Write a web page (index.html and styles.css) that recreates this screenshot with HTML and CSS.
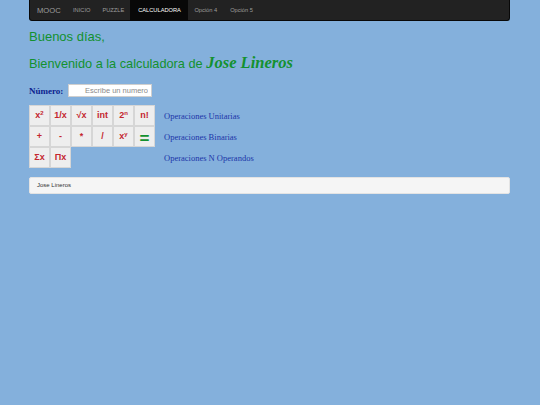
FILE: index.html
```html
<!DOCTYPE html>
<html lang="es">
<head>
<meta charset="utf-8">
<title>Calculadora</title>
<link rel="stylesheet" href="styles.css">
</head>
<body>
<div class="container">
  <nav class="navbar">
    <span class="brand">MOOC</span>
    <a class="nav-item">INICIO</a>
    <a class="nav-item">PUZZLE</a>
    <a class="nav-item active">CALCULADORA</a>
    <a class="nav-item small">Opción 4</a>
    <a class="nav-item small">Opción 5</a>
  </nav>
  <h1 class="greet">Buenos días,</h1>
  <h2 class="welcome">Bienvenido a la calculadora de <em class="name">Jose Lineros</em></h2>
  <div class="num-row">
    <label class="num-label">Número:</label>
    <input class="num-input" type="text" placeholder="Escribe un numero">
  </div>
  <div class="ops">
    <div class="op-row">
      <div class="btns">
        <button class="btn">x<sup>2</sup></button>
        <button class="btn">1/x</button>
        <button class="btn">√x</button>
        <button class="btn">int</button>
        <button class="btn">2<sup>n</sup></button>
        <button class="btn">n!</button>
      </div>
      <span class="op-label">Operaciones Unitarias</span>
    </div>
    <div class="op-row">
      <div class="btns">
        <button class="btn">+</button>
        <button class="btn">-</button>
        <button class="btn">*</button>
        <button class="btn">/</button>
        <button class="btn">x<sup>y</sup></button>
        <button class="btn eq">=</button>
      </div>
      <span class="op-label">Operaciones Binarias</span>
    </div>
    <div class="op-row">
      <div class="btns">
        <button class="btn">Σx</button>
        <button class="btn">Πx</button>
      </div>
      <span class="op-label">Operaciones N Operandos</span>
    </div>
  </div>
  <div class="footer">Jose Lineros</div>
</div>
</body>
</html>
```
FILE: styles.css
```css
html, body {
  margin: 0;
  padding: 0;
  background: #84b0dc;
  height: 100%;
}
body {
  font-family: "Liberation Sans", Arial, sans-serif;
}
.container {
  width: 481px;
  margin-left: 29px;
}
.navbar {
  display: flex;
  align-items: stretch;
  height: 21px;
  background: #222222;
  border: 1px solid #080808;
  border-top: none;
  border-radius: 0 0 3px 3px;
  box-sizing: border-box;
  padding-left: 7px;
}
.brand {
  color: #9d9d9d;
  font-size: 7.6px;
  line-height: 21px;
  width: 30px;
}
.nav-item {
  color: #9d9d9d;
  font-size: 5.7px;
  line-height: 21px;
  padding: 0 6px;
}
.nav-item.active {
  background: #080808;
  color: #ffffff;
  padding: 0 7px 0 8px;
}
.nav-item.small {
  font-size: 5.7px;
  padding: 0 6.5px;
}
.greet {
  margin: 8px 0 0 0;
  font-weight: normal;
  font-size: 13px;
  line-height: 16px;
  color: #13912f;
}
.welcome {
  margin: 8px 0 0 0;
  font-weight: normal;
  font-size: 12.75px;
  line-height: 20px;
  color: #13912f;
}
.name {
  font-family: "Liberation Serif", "Times New Roman", serif;
  font-weight: bold;
  font-size: 16.5px;
}
.num-row {
  display: flex;
  align-items: center;
  margin-top: 10px;
  height: 13px;
}
.num-label {
  font-family: "Liberation Serif", serif;
  font-weight: bold;
  font-size: 9px;
  color: #0d1f8f;
  width: 39px;
}
.num-input {
  width: 84px;
  height: 13px;
  box-sizing: border-box;
  border: 1px solid #cfcfcf;
  background: #ffffff;
  font-family: "Liberation Sans", Arial, sans-serif;
  font-size: 7.5px;
  text-align: right;
  padding: 0 3px;
  margin: 0;
  outline: none;
}
.num-input::placeholder {
  color: #8a8a8a;
}
.ops {
  margin-top: 8px;
  display: flex;
  flex-direction: column;
}
.op-row {
  display: flex;
  align-items: center;
  height: 21px;
}
.btns {
  display: flex;
  width: 126px;
  height: 21px;
  margin-right: 9px;
}
.btn {
  width: 21px;
  height: 21px;
  box-sizing: border-box;
  margin: 0;
  padding: 0;
  border: 1px solid #d6d6d6;
  background: #eeeeee;
  color: #c4262e;
  font-family: "Liberation Sans", Arial, sans-serif;
  font-weight: bold;
  font-size: 9px;
  line-height: 1;
}
.btn sup {
  font-size: 6px;
  vertical-align: 0;
  position: relative;
  top: -3px;
}
.btn.eq {
  color: #13912f;
  font-size: 17px;
  line-height: 19px;
  padding-top: 2px;
}
.op-label {
  font-family: "Liberation Serif", serif;
  font-size: 8.5px;
  color: #1c35a8;
}
.footer {
  margin-top: 9px;
  height: 17px;
  box-sizing: border-box;
  background: #f5f5f5;
  border: 1px solid #e3e3e3;
  border-radius: 2px;
  font-size: 6px;
  line-height: 15px;
  color: #333333;
  padding-left: 7px;
}
```
